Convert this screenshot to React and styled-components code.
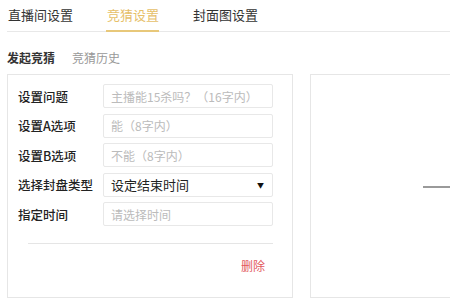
import React from 'react';
import styled, { createGlobalStyle } from 'styled-components';

const Global = createGlobalStyle`
  body {
    margin: 0;
    background: #fff;
    font-family: "Noto Sans CJK SC", "Noto Sans", sans-serif;
    color: #333;
    overflow: hidden;
  }
`;

const Page = styled.div`
  width: 450px;
  height: 300px;
  padding-left: 7px;
  box-sizing: border-box;
  overflow: hidden;
`;

const TabBar = styled.div`
  display: flex;
  height: 32px;
  border-bottom: 1px solid #e8e8e8;
  box-sizing: border-box;
`;

const Tab = styled.div`
  margin-right: 33px;
  padding-left: 1px;
  font-size: 13px;
  line-height: 30px;
  color: ${(p) => (p.$active ? '#e6c06a' : '#333')};
  border-bottom: 2px solid ${(p) => (p.$active ? '#e8c87a' : 'transparent')};
  height: 32px;
  box-sizing: border-box;
`;

const SubTabs = styled.div`
  display: flex;
  gap: 17px;
  height: 34px;
  padding-top: 8px;
  align-items: center;
`;

const SubTab = styled.div`
  font-size: 12px;
  font-weight: ${(p) => (p.$active ? 600 : 400)};
  color: ${(p) => (p.$active ? '#333' : '#999')};
`;

const Cards = styled.div`
  display: flex;
  gap: 17px;
`;

const Card = styled.div`
  width: 286px;
  height: 224px;
  flex-shrink: 0;
  border: 1px solid #e6e6e6;
  box-sizing: border-box;
  padding: 9px 19px 0 10px;
`;

const AddCard = styled.div`
  width: 200px;
  height: 224px;
  flex-shrink: 0;
  border: 1px solid #e6e6e6;
  box-sizing: border-box;
  position: relative;
`;

const PlusBar = styled.div`
  position: absolute;
  left: 112px;
  top: 111px;
  width: 40px;
  height: 2px;
  background: #9a9a9a;
`;

const Form = styled.div`
  display: flex;
  flex-direction: column;
  gap: 5.5px;
`;

const Row = styled.div`
  display: flex;
  align-items: center;
`;

const Label = styled.div`
  width: 85px;
  flex-shrink: 0;
  font-size: 12.5px;
  font-weight: 500;
  color: #222;
  white-space: nowrap;
`;

const Field = styled.div`
  width: 170px;
  height: 24px;
  border: 1px solid #e8e8e8;
  border-radius: 2px;
  box-sizing: border-box;
  display: flex;
  align-items: center;
  justify-content: space-between;
  padding: 0 6px 0 7px;
  font-size: ${(p) => (p.$value ? '13px' : '12px')};
  color: ${(p) => (p.$value ? '#222' : '#bbb')};
  white-space: nowrap;
`;

const Arrow = styled.span`
  font-size: 7px;
  color: #111;
  margin-right: 2px;
`;

const Divider = styled.div`
  margin: 17px 0 0 10px;
  height: 1px;
  background: #e5e5e5;
`;

const Footer = styled.div`
  display: flex;
  justify-content: flex-end;
  padding: 13px 8px 0 0;
`;

const Delete = styled.span`
  font-size: 12px;
  color: #e2585c;
`;

const rows = [
  { label: '设置问题', text: '主播能15杀吗？（16字内）' },
  { label: '设置A选项', text: '能（8字内）' },
  { label: '设置B选项', text: '不能（8字内）' },
  { label: '选择封盘类型', text: '设定结束时间', value: true, select: true },
  { label: '指定时间', text: '请选择时间' },
];

export default function App() {
  return (
    <Page>
      <Global />
      <TabBar>
        <Tab>直播间设置</Tab>
        <Tab $active>竞猜设置</Tab>
        <Tab>封面图设置</Tab>
      </TabBar>
      <SubTabs>
        <SubTab $active>发起竞猜</SubTab>
        <SubTab>竞猜历史</SubTab>
      </SubTabs>
      <Cards>
        <Card>
          <Form>
            {rows.map((r) => (
              <Row key={r.label}>
                <Label>{r.label}</Label>
                <Field $value={r.value}>
                  <span>{r.text}</span>
                  {r.select && <Arrow>▼</Arrow>}
                </Field>
              </Row>
            ))}
          </Form>
          <Divider />
          <Footer>
            <Delete>删除</Delete>
          </Footer>
        </Card>
        <AddCard>
          <PlusBar />
        </AddCard>
      </Cards>
    </Page>
  );
}
